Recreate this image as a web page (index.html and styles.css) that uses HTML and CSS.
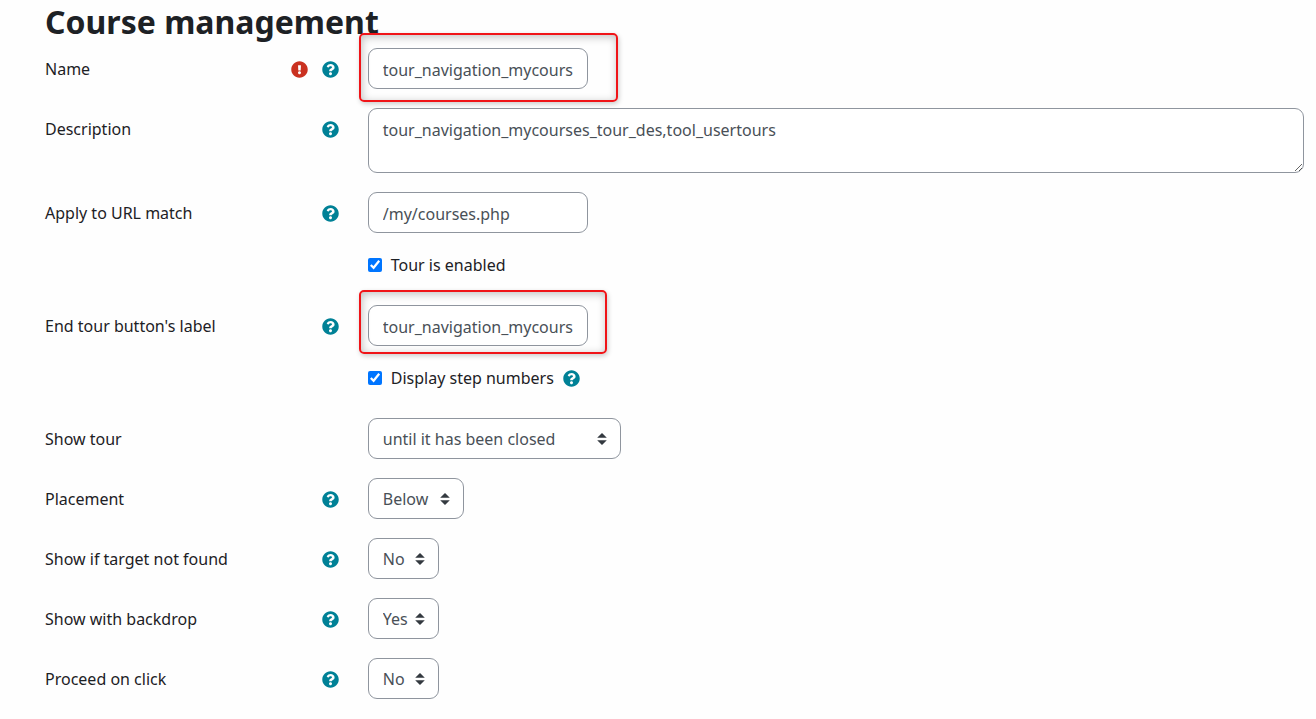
FILE: index.html
```html
<!DOCTYPE html>
<html lang="en">
<head>
	<meta charset="utf-8">
	<title>Course management</title>
	<link rel="stylesheet" href="styles.css">
</head>
<body>
	<svg class="sprite" aria-hidden="true">
		<symbol id="icon-help" viewBox="0 0 512 512">
			<path d="M504 256c0 136.997-111.043 248-248 248S8 392.997 8 256C8 119.083 119.043 8 256 8s248 111.083 248 248zM262.655 90c-54.497 0-89.255 22.957-116.549 63.758-3.536 5.286-2.353 12.415 2.715 16.258l34.699 26.31c5.205 3.947 12.621 3.008 16.665-2.122 17.864-22.658 30.113-35.797 57.303-35.797 20.429 0 45.698 13.148 45.698 32.958 0 14.976-12.363 22.667-32.534 33.976C247.128 238.528 216 254.941 216 296v4c0 6.627 5.373 12 12 12h56c6.627 0 12-5.373 12-12v-1.333c0-28.462 83.186-29.647 83.186-106.667 0-58.002-60.165-102-116.531-102zM256 338c-25.365 0-46 20.635-46 46 0 25.364 20.635 46 46 46s46-20.636 46-46c0-25.365-20.635-46-46-46z"/>
		</symbol>
		<symbol id="icon-required" viewBox="0 0 512 512">
			<path d="M504 256c0 136.997-111.043 248-248 248S8 392.997 8 256C8 119.083 119.043 8 256 8s248 111.083 248 248zm-248 50c-25.405 0-46 20.595-46 46s20.595 46 46 46 46-20.595 46-46-20.595-46-46-46zm-43.673-165.346l7.418 136c.347 6.364 5.609 11.346 11.982 11.346h48.546c6.373 0 11.635-4.982 11.982-11.346l7.418-136c.375-6.874-5.098-12.654-11.982-12.654h-63.383c-6.884 0-12.356 5.78-11.981 12.654z"/>
		</symbol>
	</svg>

	<main class="page">
		<h1 class="title">Course management</h1>

		<form class="tour-form">
			<div class="row">
				<div class="row-label">
					<label for="name">Name</label>
					<span class="icons">
						<svg class="icon required" role="img" aria-label="Required"><use href="#icon-required"/></svg>
						<button type="button" class="help" aria-label="Help with Name"><svg class="icon"><use href="#icon-help"/></svg></button>
					</span>
				</div>
				<div class="row-field">
					<span class="marked">
						<input type="text" id="name" class="control text" value="tour_navigation_mycourses_tour_name,tool_usertours">
						<span class="highlight highlight-wide"></span>
					</span>
				</div>
			</div>

			<div class="row">
				<div class="row-label">
					<label for="description">Description</label>
					<button type="button" class="help" aria-label="Help with Description"><svg class="icon"><use href="#icon-help"/></svg></button>
				</div>
				<div class="row-field">
					<textarea id="description" class="control area">tour_navigation_mycourses_tour_des,tool_usertours</textarea>
				</div>
			</div>

			<div class="row">
				<div class="row-label">
					<label for="pathmatch">Apply to URL match</label>
					<button type="button" class="help" aria-label="Help with Apply to URL match"><svg class="icon"><use href="#icon-help"/></svg></button>
				</div>
				<div class="row-field">
					<input type="text" id="pathmatch" class="control text" value="/my/courses.php">
				</div>
			</div>

			<div class="row">
				<div class="row-field row-check">
					<input type="checkbox" id="enabled" class="check" checked>
					<label for="enabled">Tour is enabled</label>
				</div>
			</div>

			<div class="row">
				<div class="row-label">
					<label for="endtour">End tour button's label</label>
					<button type="button" class="help" aria-label="Help with End tour button's label"><svg class="icon"><use href="#icon-help"/></svg></button>
				</div>
				<div class="row-field">
					<span class="marked">
						<input type="text" id="endtour" class="control text" value="tour_navigation_mycourses_endtour,tool_usertours">
						<span class="highlight"></span>
					</span>
				</div>
			</div>

			<div class="row">
				<div class="row-field row-check">
					<input type="checkbox" id="stepnumbers" class="check" checked>
					<label for="stepnumbers">Display step numbers</label>
					<button type="button" class="help" aria-label="Help with Display step numbers"><svg class="icon"><use href="#icon-help"/></svg></button>
				</div>
			</div>

			<div class="row">
				<div class="row-label">
					<label for="showtour">Show tour</label>
				</div>
				<div class="row-field">
					<select id="showtour" class="control select select-long">
						<option>until it has been closed</option>
					</select>
				</div>
			</div>

			<div class="row">
				<div class="row-label">
					<label for="placement">Placement</label>
					<button type="button" class="help" aria-label="Help with Placement"><svg class="icon"><use href="#icon-help"/></svg></button>
				</div>
				<div class="row-field">
					<select id="placement" class="control select">
						<option>Below</option>
					</select>
				</div>
			</div>

			<div class="row">
				<div class="row-label">
					<label for="orphan">Show if target not found</label>
					<button type="button" class="help" aria-label="Help with Show if target not found"><svg class="icon"><use href="#icon-help"/></svg></button>
				</div>
				<div class="row-field">
					<select id="orphan" class="control select select-short">
						<option>Yes</option>
						<option selected>No</option>
					</select>
				</div>
			</div>

			<div class="row">
				<div class="row-label">
					<label for="backdrop">Show with backdrop</label>
					<button type="button" class="help" aria-label="Help with Show with backdrop"><svg class="icon"><use href="#icon-help"/></svg></button>
				</div>
				<div class="row-field">
					<select id="backdrop" class="control select select-short">
						<option selected>Yes</option>
						<option>No</option>
					</select>
				</div>
			</div>

			<div class="row">
				<div class="row-label">
					<label for="reflex">Proceed on click</label>
					<button type="button" class="help" aria-label="Help with Proceed on click"><svg class="icon"><use href="#icon-help"/></svg></button>
				</div>
				<div class="row-field">
					<select id="reflex" class="control select select-short">
						<option>Yes</option>
						<option selected>No</option>
					</select>
				</div>
			</div>
		</form>
	</main>
</body>
</html>
```
FILE: styles.css
```css
* {
    box-sizing: border-box;
}

body {
    margin: 0;
    background-color: #fefefe;
    color: #1d2125;
    font-family: "Noto Sans", "Open Sans", sans-serif;
    font-size: 16px;
    line-height: 24px;
}

.sprite {
    display: none;
}

.page {
    padding: 0 12px 0 45px;
}

.title {
    margin: 0;
    padding-bottom: 4px;
    font-size: 32px;
    line-height: 44px;
    font-weight: 700;
}

.tour-form {
    display: flex;
    flex-direction: column;
    gap: 19px;
}

.row {
    display: grid;
    grid-template-columns: calc(25% + 8px) 1fr;
    align-items: start;
}

.row-label {
    display: flex;
    justify-content: space-between;
    align-items: center;
    padding: 9px 29px 0 0;
}

.row-field {
    display: flex;
    grid-column: 2;
}

.row-check {
    align-items: center;
    gap: 9px;
    height: 34px;
    padding-bottom: 8px;
}

.icons {
    display: flex;
    gap: 14px;
}

.icon {
    display: block;
    width: 17px;
    height: 17px;
    fill: currentColor;
}

.required {
    color: #ca3120;
}

.help {
    padding: 0;
    border: none;
    background: none;
    color: #008196;
    cursor: pointer;
}

.control {
    display: block;
    height: 41px;
    padding: 6px 14px;
    border: 1px solid #8f959e;
    border-radius: 9px;
    background-color: #fff;
    color: #495057;
    font-family: inherit;
    font-size: 16px;
    line-height: 24px;
}

.text {
    width: 220px;
    padding-top: 8px;
}

.area {
    width: 100%;
    height: 65px;
    padding-top: 9px;
    resize: both;
}

.select {
    appearance: none;
    padding-right: 34px;
    background: #fff url("data:image/svg+xml,%3Csvg xmlns='http://www.w3.org/2000/svg' viewBox='0 0 4 5'%3E%3Cpath fill='%23343a40' d='M2 0L0 2h4zm0 5L0 3h4z'/%3E%3C/svg%3E") no-repeat right 13px center / 10px 12px;
}

.select-long {
    width: 253px;
}

.select-short {
    padding-right: 30px;
}

.check {
    width: 14px;
    height: 14px;
    margin: 0;
    accent-color: #0075ff;
}

.marked {
    position: relative;
}

/* red frame around the fields that use language strings */
.highlight {
    position: absolute;
    inset: -15px -19px -8px -9px;
    border: 2px solid #f01418;
    border-radius: 5px;
    box-shadow: 1px 2px 5px rgba(0, 0, 0, 0.2), inset 1px 2px 8px rgba(0, 0, 0, 0.25);
    pointer-events: none;
}

.highlight-wide {
    right: -30px;
    bottom: -13px;
}
```
